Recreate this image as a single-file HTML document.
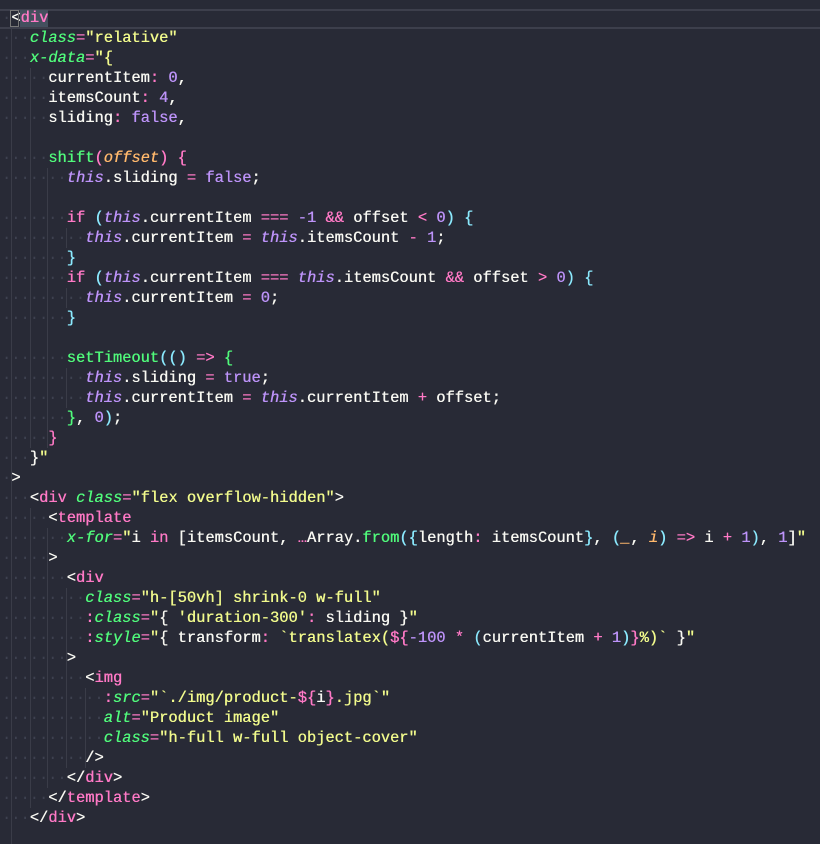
<!DOCTYPE html>
<html><head><meta charset="utf-8"><style>
html,body{margin:0;padding:0;background:#282a36;width:820px;height:844px;overflow:hidden;position:relative}
pre{margin:0;position:absolute;left:2px;top:8px;font-family:"Liberation Mono",monospace;font-size:15.4px;line-height:20px;color:#f8f8f2;z-index:2;text-shadow:0.35px 0 currentColor}
.w{color:#3e4150;text-shadow:none}
.t{color:#ff79c6}.a{color:#50fa7b;font-style:italic}.s{color:#f1fa8c}.p{color:#bd93f9}.pi{color:#bd93f9;font-style:italic}
.c{color:#8be9fd}.o{color:#ffb86c;font-style:italic}.g{color:#50fa7b}.k{color:#ff79c6}
.hl{position:absolute;left:0;width:820px;height:2px;background:#3d3f4c}
.gd{position:absolute;width:1px;background:#3a3c48;z-index:1}
.sel{position:absolute;left:20px;top:10px;width:28px;height:17px;background:#44505e;z-index:0}
.cur{position:absolute;left:10px;top:10px;width:9px;height:17px;border:1px solid #777;box-sizing:border-box;z-index:3}
</style></head><body>
<div class="hl" style="top:9px"></div>
<div class="hl" style="top:27px"></div>
<div class="sel"></div>
<div class="cur"></div>
<div class="gd" style="left:11px;top:28px;height:816px"></div>
<div class="gd" style="left:30px;top:68px;height:380px"></div>
<div class="gd" style="left:47px;top:168px;height:280px"></div>
<div class="gd" style="left:66px;top:228px;height:20px"></div>
<div class="gd" style="left:66px;top:288px;height:20px"></div>
<div class="gd" style="left:66px;top:368px;height:40px"></div>
<div class="gd" style="left:30px;top:508px;height:300px"></div>
<div class="gd" style="left:47px;top:528px;height:260px"></div>
<div class="gd" style="left:66px;top:588px;height:180px"></div>
<div class="gd" style="left:85px;top:688px;height:80px"></div>
<pre><span class="w">·</span>&lt;<span class="t">div</span>
<span class="w">···</span><span class="a">class</span><span class="k">=</span><span class="s">"relative"</span>
<span class="w">···</span><span class="a">x-data</span><span class="k">=</span><span class="s">"{</span>
<span class="w">·····</span>currentItem<span class="k">:</span> <span class="p">0</span>,
<span class="w">·····</span>itemsCount<span class="k">:</span> <span class="p">4</span>,
<span class="w">·····</span>sliding<span class="k">:</span> <span class="p">false</span>,

<span class="w">·····</span><span class="g">shift</span><span class="k">(</span><span class="o">offset</span><span class="k">)</span> <span class="k">{</span>
<span class="w">·······</span><span class="pi">this</span>.sliding <span class="k">=</span> <span class="p">false</span>;

<span class="w">·······</span><span class="k">if</span> <span class="c">(</span><span class="pi">this</span>.currentItem <span class="k">===</span> <span class="p">-1</span> <span class="k">&amp;&amp;</span> offset <span class="k">&lt;</span> <span class="p">0</span><span class="c">)</span> <span class="c">{</span>
<span class="w">·········</span><span class="pi">this</span>.currentItem <span class="k">=</span> <span class="pi">this</span>.itemsCount <span class="k">-</span> <span class="p">1</span>;
<span class="w">·······</span><span class="c">}</span>
<span class="w">·······</span><span class="k">if</span> <span class="c">(</span><span class="pi">this</span>.currentItem <span class="k">===</span> <span class="pi">this</span>.itemsCount <span class="k">&amp;&amp;</span> offset <span class="k">&gt;</span> <span class="p">0</span><span class="c">)</span> <span class="c">{</span>
<span class="w">·········</span><span class="pi">this</span>.currentItem <span class="k">=</span> <span class="p">0</span>;
<span class="w">·······</span><span class="c">}</span>

<span class="w">·······</span><span class="g">setTimeout</span><span class="c">(()</span> <span class="k">=&gt;</span> <span class="g">{</span>
<span class="w">·········</span><span class="pi">this</span>.sliding <span class="k">=</span> <span class="p">true</span>;
<span class="w">·········</span><span class="pi">this</span>.currentItem <span class="k">=</span> <span class="pi">this</span>.currentItem <span class="k">+</span> offset;
<span class="w">·······</span><span class="g">}</span>, <span class="p">0</span><span class="c">)</span>;
<span class="w">·····</span><span class="k">}</span>
<span class="w">···</span>}<span class="s">"</span>
<span class="w">·</span>&gt;
<span class="w">···</span>&lt;<span class="t">div</span> <span class="a">class</span><span class="k">=</span><span class="s">"flex overflow-hidden"</span>&gt;
<span class="w">·····</span>&lt;<span class="t">template</span>
<span class="w">·······</span><span class="a">x-for</span><span class="k">=</span><span class="s">"</span>i <span class="k">in</span> [itemsCount, <span class="k">…</span>Array.<span class="g">from</span><span class="c">({</span>length<span class="k">:</span> itemsCount<span class="c">}</span>, <span class="c">(</span><span class="o">_</span>, <span class="o">i</span><span class="c">)</span> <span class="k">=&gt;</span> i <span class="k">+</span> <span class="p">1</span><span class="c">)</span>, <span class="p">1</span>]<span class="s">"</span>
<span class="w">·····</span>&gt;
<span class="w">·······</span>&lt;<span class="t">div</span>
<span class="w">·········</span><span class="a">class</span><span class="k">=</span><span class="s">"h-[50vh] shrink-0 w-full"</span>
<span class="w">·········</span><span class="k">:</span><span class="a">class</span><span class="k">=</span><span class="s">"</span>{ <span class="s">'duration-300'</span><span class="k">:</span> sliding }<span class="s">"</span>
<span class="w">·········</span><span class="k">:</span><span class="a">style</span><span class="k">=</span><span class="s">"</span>{ transform<span class="k">:</span> <span class="s">`translatex(</span><span class="k">${</span><span class="p">-100</span> <span class="k">*</span> <span class="c">(</span>currentItem <span class="k">+</span> <span class="p">1</span><span class="c">)</span><span class="k">}</span><span class="s">%)`</span> }<span class="s">"</span>
<span class="w">·······</span>&gt;
<span class="w">·········</span>&lt;<span class="t">img</span>
<span class="w">···········</span><span class="k">:</span><span class="a">src</span><span class="k">=</span><span class="s">"`./img/product-</span><span class="k">${</span>i<span class="k">}</span><span class="s">.jpg`"</span>
<span class="w">···········</span><span class="a">alt</span><span class="k">=</span><span class="s">"Product image"</span>
<span class="w">···········</span><span class="a">class</span><span class="k">=</span><span class="s">"h-full w-full object-cover"</span>
<span class="w">·········</span>/&gt;
<span class="w">·······</span>&lt;/<span class="t">div</span>&gt;
<span class="w">·····</span>&lt;/<span class="t">template</span>&gt;
<span class="w">···</span>&lt;/<span class="t">div</span>&gt;</pre>
</body></html>
